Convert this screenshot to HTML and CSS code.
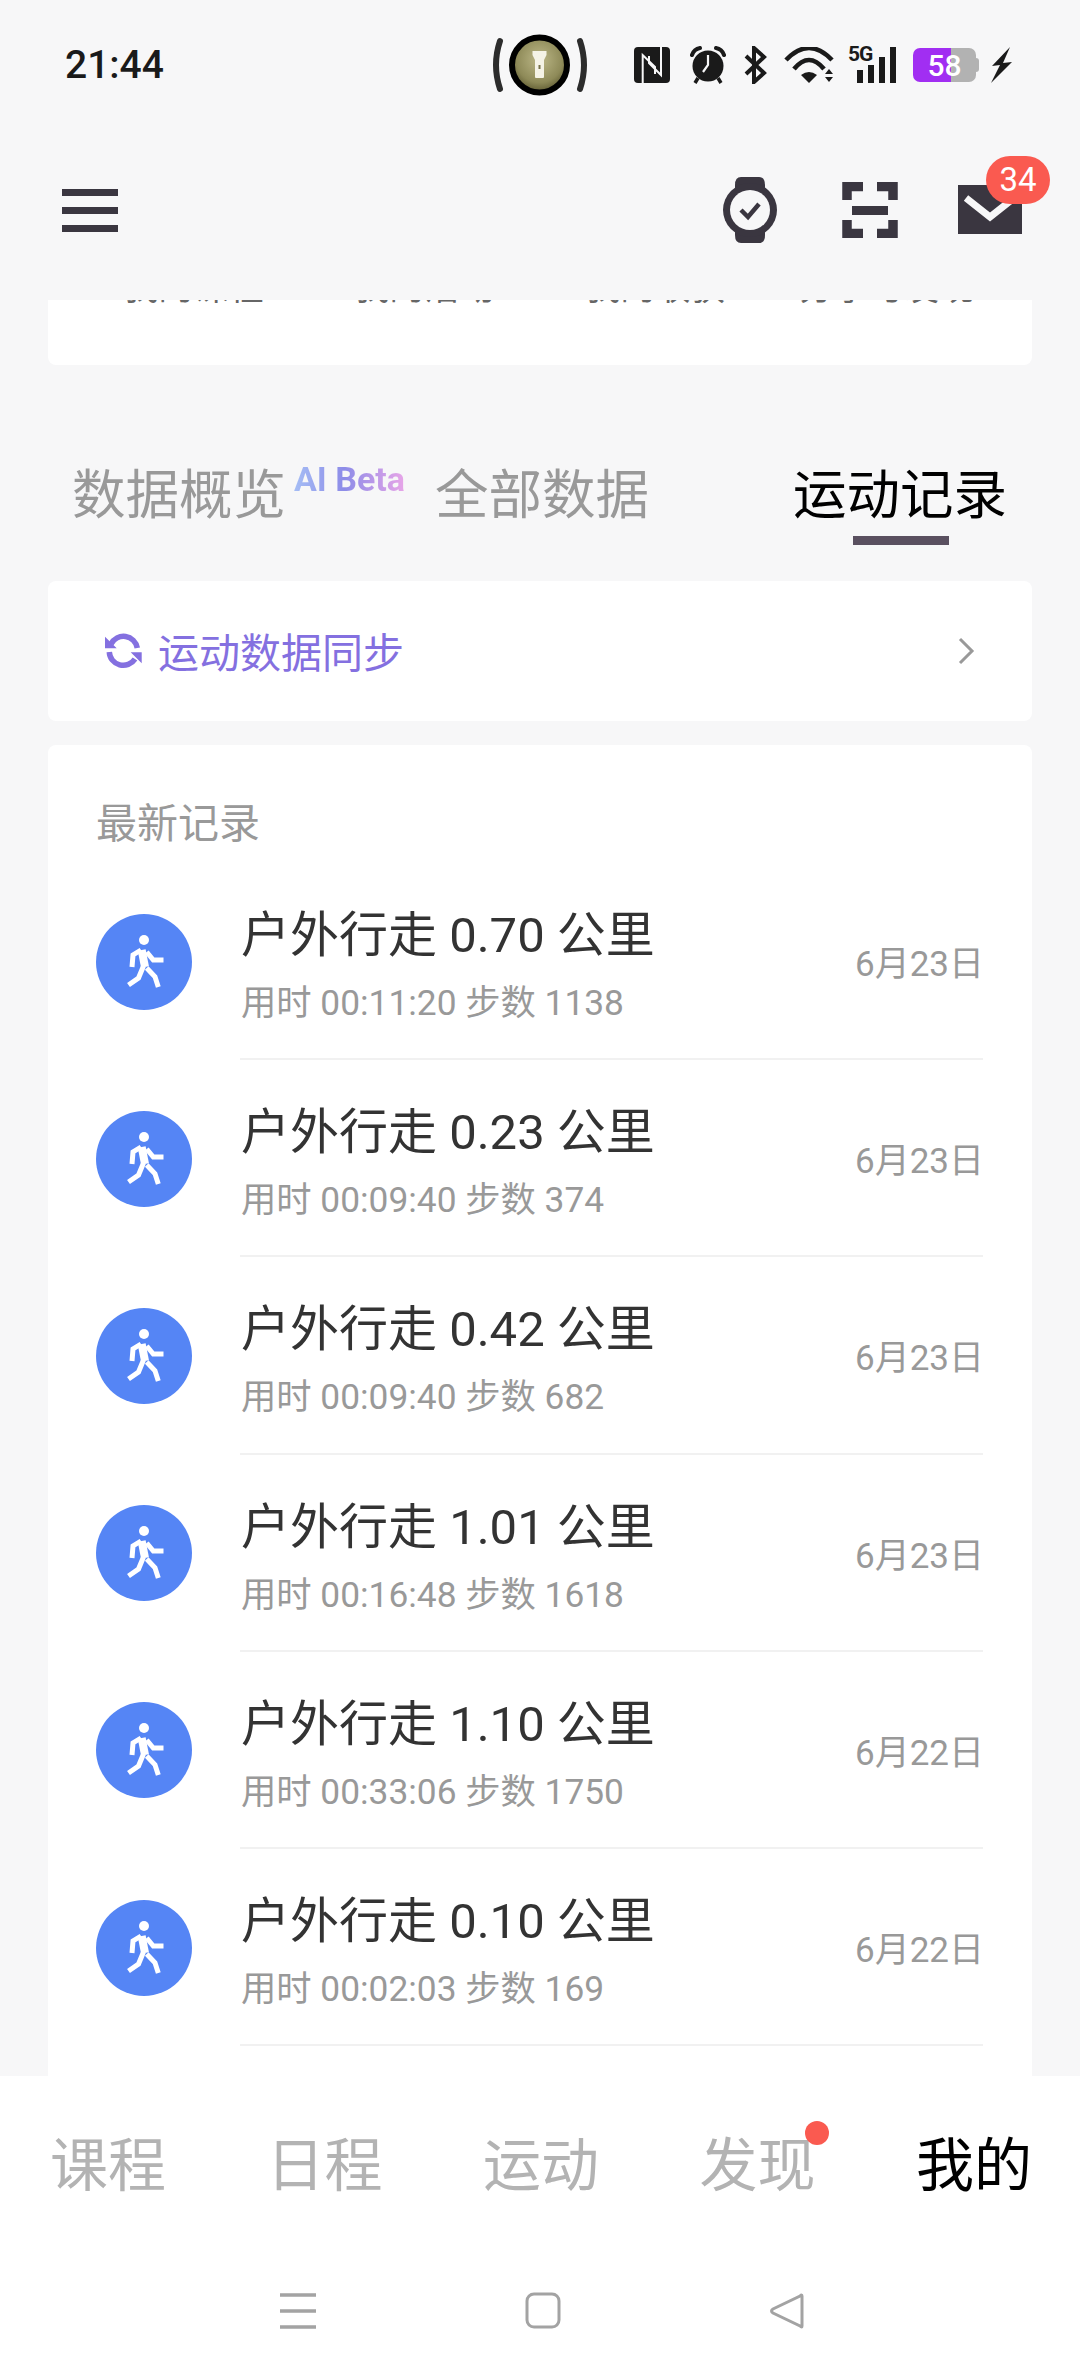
FILE: index.html
```html
<!DOCTYPE html>
<html lang="zh-CN">
<head>
  <meta charset="UTF-8">
  <meta name="viewport" content="width=device-width, initial-scale=1.0">
  <title>运动记录</title>
  <link rel="stylesheet" href="styles.css">
</head>
<body>
  <div class="page">
    <div class="status-bar">
      <span class="status-time">21:44</span>
      <div class="torch">
        <svg width="96" height="62" viewBox="0 0 96 62">
          <defs>
            <radialGradient id="torchGlow" cx="50%" cy="40%" r="60%">
              <stop offset="0" stop-color="#bdb888"/>
              <stop offset="0.7" stop-color="#8e8a58"/>
              <stop offset="1" stop-color="#5c5830"/>
            </radialGradient>
          </defs>
          <path d="M8 7 Q0 31 8 55" class="torch-paren"/>
          <path d="M88 7 Q96 31 88 55" class="torch-paren"/>
          <ellipse cx="47.5" cy="31" rx="27.5" ry="27.5" fill="url(#torchGlow)" stroke="#000" stroke-width="6"/>
          <path d="M40.5 17 H54.5 V21 L52 26 V43 Q52 44 51 44 H44 Q43 44 43 43 V26 L40.5 21 Z" fill="#f5f3e6"/>
          <rect x="46.5" y="31" width="2" height="4" fill="#77724a"/>
        </svg>
      </div>
      <div class="status-icons">
        <svg width="36" height="36" viewBox="0 0 36 36">
          <rect width="36" height="36" rx="4" fill="#1a1a1a"/>
          <path d="M8.7 36 V8 L21 20 V27 M27 0 V28 L15 16 V9" fill="none" stroke="#f7f7f8" stroke-width="2"/>
        </svg>
        <svg class="gap-alarm" width="36" height="38" viewBox="0 0 36 38">
          <circle cx="18" cy="20" r="15.5" fill="#1a1a1a"/>
          <path d="M2 9 Q4 3 10 2 M34 9 Q32 3 26 2" fill="none" stroke="#1a1a1a" stroke-width="4" stroke-linecap="round"/>
          <path d="M8 32 L5 37 M28 32 L31 37" stroke="#1a1a1a" stroke-width="3.5"/>
          <path d="M18 9 V19 L13 26" fill="none" stroke="#f7f7f8" stroke-width="2.2"/>
        </svg>
        <svg class="gap-bt" width="23" height="38" viewBox="0 0 23 38">
          <path d="M2 10 L20 27 L10 36 V2 L20 11 L2 28" fill="none" stroke="#1a1a1a" stroke-width="4"/>
        </svg>
        <svg class="gap-wifi" width="50" height="36" viewBox="0 0 50 36">
          <path d="M2 13 Q25 -11 48 13 M10 22 Q25 4 40 22" fill="none" stroke="#1a1a1a" stroke-width="4.6"/>
          <path d="M17 28 Q25 22 33 28 L25 36 Z" fill="#1a1a1a"/>
          <path d="M41 27 L45 22 L49 27 Z M41 30 H49 L45 35 Z" fill="#1a1a1a"/>
        </svg>
        <div class="signal gap-signal">
          <span class="signal-5g">5G</span>
          <svg width="48" height="36" viewBox="0 0 48 36">
            <path d="M9 23 H15 V36 H9 Z M20 18 H26 V36 H20 Z M31 10 H37 V36 H31 Z M42 0 H48 V36 H42 Z" fill="#1a1a1a"/>
          </svg>
        </div>
        <div class="battery gap-battery">
          <div class="battery-body"><span class="battery-level">58</span></div>
          <div class="battery-tip"></div>
        </div>
        <svg class="gap-bolt" width="21" height="36" viewBox="0 0 21 36">
          <path d="M19 0 L1 19 L9 18 L0 36 L21 15 L12 16 Z" fill="#1a1a1a"/>
        </svg>
      </div>
    </div>

    <div class="top-bar">
      <div class="menu-icon"><span></span><span></span><span></span></div>
      <div class="top-actions">
        <svg width="54" height="66" viewBox="0 0 54 66">
          <path d="M12 8 Q12 0 18 0 H36 Q42 0 42 8 V58 Q42 66 36 66 H18 Q12 66 12 58 Z" fill="#3a3640"/>
          <ellipse cx="27" cy="33" rx="27" ry="27" fill="#3a3640"/>
          <circle cx="27" cy="33" r="20" fill="#f7f7f8"/>
          <path d="M18 33 L25 40 L36 27" fill="none" stroke="#3a3640" stroke-width="4.5"/>
        </svg>
        <svg class="scan-icon" width="56" height="56" viewBox="0 0 56 56">
          <path d="M21 4.5 H5 V18 M35 4.5 H51 V18 M21 51.5 H5 V38 M35 51.5 H51 V38" fill="none" stroke="#3a3640" stroke-width="9.5"/>
          <rect x="10" y="24" width="36" height="9" fill="#3a3640"/>
        </svg>
        <div class="mail">
          <svg width="64" height="49" viewBox="0 0 64 49">
            <rect width="64" height="49" fill="#3a3640"/>
            <path d="M8 13 L32 32 L56 13" fill="none" stroke="#f7f7f8" stroke-width="7"/>
          </svg>
          <span class="mail-badge">34</span>
        </div>
      </div>
    </div>

    <div class="content">
      <div class="peek-card">
        <div class="peek-row">
          <span>我的课程</span><span>我的活动</span><span>我的收获</span><span>分享与发现</span>
        </div>
      </div>

      <div class="tabs">
        <span class="tab">数据概览</span>
        <span class="tab-beta">AI Beta</span>
        <span class="tab">全部数据</span>
        <span class="tab tab-active">运动记录</span>
      </div>

      <div class="sync-card">
        <svg width="40" height="36" viewBox="0 0 40 36">
          <path d="M8 11 A14 14 0 0 1 34.3 15 M6.3 19 A14 14 0 0 0 32 26" fill="none" stroke="#8470e0" stroke-width="5.5"/>
          <path d="M2 3.7 V15.3 H13.7 Z M38.7 30.3 V19.3 H27.7 Z" fill="#8470e0"/>
        </svg>
        <span class="sync-text">运动数据同步</span>
        <svg class="chevron" width="18" height="28" viewBox="0 0 18 28">
          <path d="M3 2 L15 14 L3 26" fill="none" stroke="#999" stroke-width="3"/>
        </svg>
      </div>

      <div class="records">
        <div class="records-title">最新记录</div>
        <div class="record">
          <svg class="walker" width="96" height="96" viewBox="0 0 96 96"><use href="#walk"/></svg>
          <div class="record-body">
            <div class="record-main">
              <div class="record-title">户外行走 0.70 公里</div>
              <div class="record-sub">用时 00:11:20 步数 1138</div>
            </div>
            <div class="record-date">6月23日</div>
          </div>
        </div>
        <div class="record">
          <svg class="walker" width="96" height="96" viewBox="0 0 96 96"><use href="#walk"/></svg>
          <div class="record-body">
            <div class="record-main">
              <div class="record-title">户外行走 0.23 公里</div>
              <div class="record-sub">用时 00:09:40 步数 374</div>
            </div>
            <div class="record-date">6月23日</div>
          </div>
        </div>
        <div class="record">
          <svg class="walker" width="96" height="96" viewBox="0 0 96 96"><use href="#walk"/></svg>
          <div class="record-body">
            <div class="record-main">
              <div class="record-title">户外行走 0.42 公里</div>
              <div class="record-sub">用时 00:09:40 步数 682</div>
            </div>
            <div class="record-date">6月23日</div>
          </div>
        </div>
        <div class="record">
          <svg class="walker" width="96" height="96" viewBox="0 0 96 96"><use href="#walk"/></svg>
          <div class="record-body">
            <div class="record-main">
              <div class="record-title">户外行走 1.01 公里</div>
              <div class="record-sub">用时 00:16:48 步数 1618</div>
            </div>
            <div class="record-date">6月23日</div>
          </div>
        </div>
        <div class="record">
          <svg class="walker" width="96" height="96" viewBox="0 0 96 96"><use href="#walk"/></svg>
          <div class="record-body">
            <div class="record-main">
              <div class="record-title">户外行走 1.10 公里</div>
              <div class="record-sub">用时 00:33:06 步数 1750</div>
            </div>
            <div class="record-date">6月22日</div>
          </div>
        </div>
        <div class="record">
          <svg class="walker" width="96" height="96" viewBox="0 0 96 96"><use href="#walk"/></svg>
          <div class="record-body">
            <div class="record-main">
              <div class="record-title">户外行走 0.10 公里</div>
              <div class="record-sub">用时 00:02:03 步数 169</div>
            </div>
            <div class="record-date">6月22日</div>
          </div>
        </div>
      </div>
    </div>

    <div class="bottom">
      <div class="bottom-tabs">
        <span>课程</span>
        <span>日程</span>
        <span>运动</span>
        <span class="has-dot">发现<i class="dot"></i></span>
        <span class="bottom-active">我的</span>
      </div>
      <div class="nav-bar">
        <svg width="38" height="36" viewBox="0 0 38 36">
          <path d="M1 2 H37 M1 18 H37 M1 34 H37" stroke="#a3a3a3" stroke-width="3.4"/>
        </svg>
        <svg width="36" height="37" viewBox="0 0 36 37">
          <rect x="2" y="2" width="32" height="33" rx="7" fill="none" stroke="#a3a3a3" stroke-width="3"/>
        </svg>
        <svg width="36" height="36" viewBox="0 0 36 36">
          <path d="M33 3 V33 Q33 35 31 33 L4 20 Q1 18 4 16 L31 3 Q33 1 33 3 Z" fill="none" stroke="#a3a3a3" stroke-width="3"/>
        </svg>
      </div>
    </div>
  </div>

  <svg class="defs" width="0" height="0">
    <symbol id="walk" viewBox="0 0 96 96">
      <circle cx="48" cy="48" r="48" fill="#5585f5"/>
      <circle cx="48" cy="26" r="5" fill="#fff"/>
      <path d="M45.7 36 L49 53" fill="none" stroke="#fff" stroke-width="8"/>
      <path d="M45 36 L37 41 L36 53 M50.7 38 L57.3 46 L67.5 46 M47.5 52 L42.5 64 L32.5 71 M50.7 54 L59 62.7 L62.3 73" fill="none" stroke="#fff" stroke-width="5"/>
    </symbol>
  </svg>
</body>
</html>
```

FILE: styles.css
```css
* {
  margin: 0;
  padding: 0;
  box-sizing: border-box;
}

body {
  font-family: Roboto, "Noto Sans CJK SC", sans-serif;
  background: #f7f7f8;
  overflow: hidden;
}

.page {
  width: 1080px;
  height: 2376px;
  display: flex;
  flex-direction: column;
  overflow: hidden;
}

.defs {
  position: absolute;
}

/* status bar */
.status-bar {
  height: 130px;
  display: flex;
  align-items: center;
  padding: 0 68px 0 65px;
  flex-shrink: 0;
}

.status-time {
  font-size: 39px;
  font-weight: 500;
  color: #1a1a1a;
  width: 427px;
}

.torch {
  display: flex;
  width: 96px;
}

.torch-paren {
  fill: none;
  stroke: #2c2c2c;
  stroke-width: 6;
  stroke-linecap: round;
}

.status-icons {
  margin-left: auto;
  display: flex;
  align-items: center;
}

.gap-alarm { margin-left: 20px; }
.gap-bt { margin-left: 18px; }
.gap-wifi { margin-left: 17px; }
.gap-signal { margin-left: 14px; }
.gap-battery { margin-left: 17px; }
.gap-bolt { margin-left: 12px; }

.signal {
  position: relative;
  display: flex;
}

.signal-5g {
  position: absolute;
  left: 0;
  top: -5px;
  font-size: 21px;
  font-weight: 700;
  letter-spacing: -1px;
  color: #1a1a1a;
}

.battery {
  display: flex;
  align-items: center;
}

.battery-body {
  width: 63px;
  height: 34px;
  border-radius: 7px;
  background: linear-gradient(to right, #a12ef2 0, #a12ef2 61%, #b2b2b2 61%);
  display: flex;
  align-items: center;
  justify-content: center;
}

.battery-level {
  font-size: 30px;
  font-weight: 500;
  color: #fff;
}

.battery-tip {
  width: 3px;
  height: 14px;
  background: #b2b2b2;
  border-radius: 0 3px 3px 0;
}

/* top bar */
.top-bar {
  height: 170px;
  display: flex;
  justify-content: space-between;
  align-items: flex-start;
  padding: 0 58px 0 62px;
  flex-shrink: 0;
}

.menu-icon {
  width: 56px;
  margin-top: 59px;
  display: flex;
  flex-direction: column;
  gap: 11px;
}

.menu-icon span {
  height: 7px;
  background: #3a3640;
}

.top-actions {
  display: flex;
  align-items: flex-start;
  padding-top: 47px;
  gap: 65px;
}

.scan-icon {
  margin-top: 5px;
}

.mail {
  position: relative;
  margin-top: 8px;
  margin-left: -5px;
  display: flex;
}

.mail-badge {
  position: absolute;
  left: 28px;
  top: -29px;
  width: 64px;
  height: 48px;
  border-radius: 24px;
  background: #fa5a50;
  color: #fff;
  font-size: 33px;
  line-height: 48px;
  text-align: center;
}

/* scrolling part */
.content {
  flex: 1;
  min-height: 0;
  overflow: hidden;
  padding: 0 48px;
}

.peek-card {
  height: 65px;
  background: #fff;
  border-radius: 0 0 8px 8px;
  overflow: hidden;
}

.peek-row {
  margin-top: -33px;
  height: 44px;
  padding-left: 30px;
  display: flex;
  font-size: 35px;
  line-height: 44px;
  color: #666;
}

.peek-row span {
  width: 231px;
  text-align: center;
}

.tabs {
  margin-top: 93px;
  height: 123px;
  padding: 0 25px 0 24px;
  display: flex;
  align-items: flex-start;
}

.tab {
  font-size: 53.5px;
  line-height: 76px;
  color: #999;
}

.tab-beta {
  font-size: 34px;
  font-weight: 700;
  line-height: 40px;
  margin: 1px 30px 0 8px;
  background: linear-gradient(to right, #a5bdf5, #8d8ce8 45%, #e8a5e8);
  -webkit-background-clip: text;
  background-clip: text;
  color: transparent;
}

.tab-active {
  margin-left: auto;
  color: #000;
  position: relative;
}

.tab-active::after {
  content: "";
  position: absolute;
  left: 60px;
  bottom: -11px;
  width: 96px;
  height: 9px;
  background: #5a5060;
}

.sync-card {
  height: 140px;
  background: #fff;
  border-radius: 8px;
  display: flex;
  align-items: center;
  padding: 0 57px 0 55px;
}

.sync-text {
  margin: 0 0 2px 15px;
  font-size: 41px;
  color: #8470e0;
}

.chevron {
  margin-left: auto;
}

.records {
  margin-top: 24px;
  background: #fff;
  border-radius: 8px 8px 0 0;
  padding: 0 49px 0 48px;
  height: 1400px;
}

.records-title {
  height: 118px;
  padding-top: 54px;
  font-size: 41px;
  line-height: 50px;
  color: #999;
}

.record {
  height: 197.2px;
  display: flex;
  align-items: center;
}

.walker {
  flex-shrink: 0;
}

.record-body {
  flex: 1;
  height: 100%;
  margin-left: 48px;
  display: flex;
  align-items: center;
  border-bottom: 2px solid #f1f1f1;
}

.record-main {
  padding: 8px 0 0 1px;
}

.record-title {
  font-size: 49px;
  line-height: 70px;
  color: #333;
}

.record-sub {
  margin-top: 7px;
  font-size: 35.3px;
  line-height: 50px;
  color: #999;
}

.record-date {
  margin: 0 -1px 0 auto;
  font-size: 35px;
  color: #999;
}

.bottom {
  height: 300px;
  flex-shrink: 0;
  background: #fff;
}

.bottom-tabs {
  height: 216px;
  padding: 52px 48px 0 50px;
  display: flex;
  justify-content: space-between;
  font-size: 58px;
  line-height: 76px;
  color: #b3b3b3;
}

.has-dot {
  position: relative;
}

.dot {
  position: absolute;
  right: -14px;
  top: -7px;
  width: 24px;
  height: 24px;
  border-radius: 50%;
  background: #fa5a50;
}

.bottom-active {
  color: #000;
}

.nav-bar {
  display: flex;
  justify-content: center;
  gap: 208px;
  padding-left: 3px;
  align-items: center;
}
```
